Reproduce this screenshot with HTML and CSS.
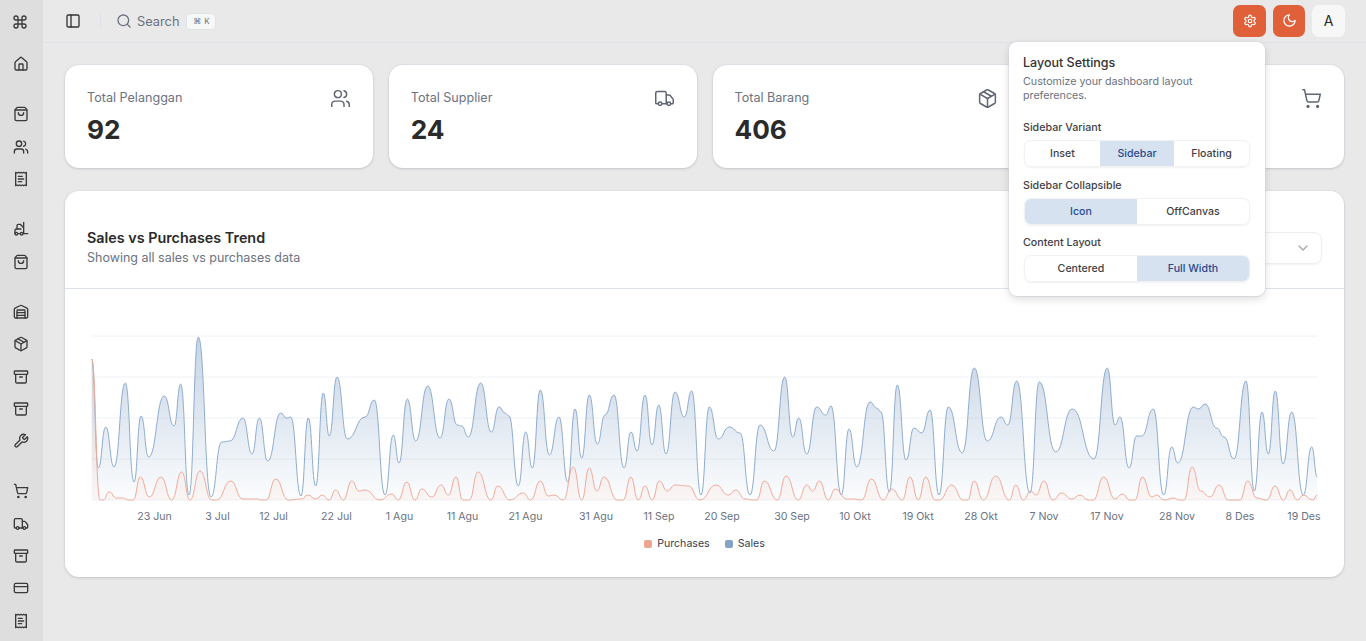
FILE: index.html
```html
<!DOCTYPE html>
<html lang="en">
<head>
  <meta charset="UTF-8">
  <meta name="viewport" content="width=device-width, initial-scale=1.0">
  <title>Dashboard</title>
  <link rel="stylesheet" href="styles.css">
</head>
<body>
  <svg class="sprite" aria-hidden="true">
    <symbol id="i-command" viewBox="0 0 24 24"><path d="M15 6v12a3 3 0 1 0 3-3H6a3 3 0 1 0 3 3V6a3 3 0 1 0-3 3h12a3 3 0 1 0-3-3"/></symbol>
    <symbol id="i-home" viewBox="0 0 24 24"><path d="M15 21v-8a1 1 0 0 0-1-1h-4a1 1 0 0 0-1 1v8"/><path d="M3 10a2 2 0 0 1 .709-1.528l7-5.999a2 2 0 0 1 2.582 0l7 5.999A2 2 0 0 1 21 10v9a2 2 0 0 1-2 2H5a2 2 0 0 1-2-2z"/></symbol>
    <symbol id="i-bag" viewBox="0 0 24 24"><path d="M16 10a4 4 0 0 1-8 0"/><path d="M3.103 6.034h17.794"/><path d="M3.4 5.467a2 2 0 0 0-.4 1.2V20a2 2 0 0 0 2 2h14a2 2 0 0 0 2-2V6.667a2 2 0 0 0-.4-1.2l-2-2.667A2 2 0 0 0 17 2H7a2 2 0 0 0-1.6.8z"/></symbol>
    <symbol id="i-users" viewBox="0 0 24 24"><path d="M16 21v-2a4 4 0 0 0-4-4H6a4 4 0 0 0-4 4v2"/><circle cx="9" cy="7" r="4"/><path d="M22 21v-2a4 4 0 0 0-3-3.87"/><path d="M16 3.13a4 4 0 0 1 0 7.75"/></symbol>
    <symbol id="i-receipt" viewBox="0 0 24 24"><path d="M4 2v20l2-1 2 1 2-1 2 1 2-1 2 1 2-1 2 1V2l-2 1-2-1-2 1-2-1-2 1-2-1-2 1Z"/><path d="M14 8H8"/><path d="M16 12H8"/><path d="M13 16H8"/></symbol>
    <symbol id="i-forklift" viewBox="0 0 24 24"><path d="M12 12H5a2 2 0 0 0-2 2v5"/><circle cx="13" cy="19" r="2"/><circle cx="5" cy="19" r="2"/><path d="M8 19h3m5-17v17h6M6 12V7c0-1.1.9-2 2-2h3l5 5"/></symbol>
    <symbol id="i-warehouse" viewBox="0 0 24 24"><path d="M18 21V10a1 1 0 0 0-1-1H7a1 1 0 0 0-1 1v11"/><path d="M22 19a2 2 0 0 1-2 2H4a2 2 0 0 1-2-2V8a2 2 0 0 1 1.132-1.803l7.95-3.974a2 2 0 0 1 1.837 0l7.948 3.974A2 2 0 0 1 22 8z"/><path d="M6 13h12"/><path d="M6 17h12"/></symbol>
    <symbol id="i-package" viewBox="0 0 24 24"><path d="M11 21.73a2 2 0 0 0 2 0l7-4A2 2 0 0 0 21 16V8a2 2 0 0 0-1-1.73l-7-4a2 2 0 0 0-2 0l-7 4A2 2 0 0 0 3 8v8a2 2 0 0 0 1 1.73z"/><path d="M12 22V12"/><path d="M3.3 7 12 12l8.7-5"/><path d="m7.5 4.27 9 5.15"/></symbol>
    <symbol id="i-archive" viewBox="0 0 24 24"><rect x="2" y="3" width="20" height="5" rx="1"/><path d="M4 8v11a2 2 0 0 0 2 2h12a2 2 0 0 0 2-2V8"/><path d="M10 12h4"/></symbol>
    <symbol id="i-wrench" viewBox="0 0 24 24"><path d="M14.7 6.3a1 1 0 0 0 0 1.4l1.6 1.6a1 1 0 0 0 1.4 0l3.77-3.77a6 6 0 0 1-7.94 7.94l-6.91 6.91a2.12 2.12 0 0 1-3-3l6.91-6.91a6 6 0 0 1 7.94-7.94l-3.76 3.76z"/></symbol>
    <symbol id="i-cart" viewBox="0 0 24 24"><circle cx="8" cy="21" r="1"/><circle cx="19" cy="21" r="1"/><path d="M2.05 2.05h2l2.66 12.42a2 2 0 0 0 2 1.58h9.78a2 2 0 0 0 1.95-1.57l1.65-7.43H5.12"/></symbol>
    <symbol id="i-truck" viewBox="0 0 24 24"><path d="M14 18V6a2 2 0 0 0-2-2H4a2 2 0 0 0-2 2v11a1 1 0 0 0 1 1h2"/><path d="M15 18H9"/><path d="M19 18h2a1 1 0 0 0 1-1v-3.65a1 1 0 0 0-.22-.624l-3.48-4.35A1 1 0 0 0 17.52 8H14"/><circle cx="17" cy="18" r="2"/><circle cx="7" cy="18" r="2"/></symbol>
    <symbol id="i-card" viewBox="0 0 24 24"><rect x="2" y="5" width="20" height="14" rx="2"/><path d="M2 10h20"/></symbol>
    <symbol id="i-panel" viewBox="0 0 24 24"><rect x="3" y="3" width="18" height="18" rx="2"/><path d="M9 3v18"/></symbol>
    <symbol id="i-search" viewBox="0 0 24 24"><circle cx="11" cy="11" r="8"/><path d="m21 21-4.3-4.3"/></symbol>
    <symbol id="i-settings" viewBox="0 0 24 24"><path d="M12.22 2h-.44a2 2 0 0 0-2 2v.18a2 2 0 0 1-1 1.73l-.43.25a2 2 0 0 1-2 0l-.15-.08a2 2 0 0 0-2.73.73l-.22.38a2 2 0 0 0 .73 2.73l.15.1a2 2 0 0 1 1 1.72v.51a2 2 0 0 1-1 1.74l-.15.09a2 2 0 0 0-.73 2.73l.22.38a2 2 0 0 0 2.73.73l.15-.08a2 2 0 0 1 2 0l.43.25a2 2 0 0 1 1 1.73V20a2 2 0 0 0 2 2h.44a2 2 0 0 0 2-2v-.18a2 2 0 0 1 1-1.73l.43-.25a2 2 0 0 1 2 0l.15.08a2 2 0 0 0 2.73-.73l.22-.39a2 2 0 0 0-.73-2.73l-.15-.08a2 2 0 0 1-1-1.74v-.5a2 2 0 0 1 1-1.74l.15-.09a2 2 0 0 0 .73-2.73l-.22-.38a2 2 0 0 0-2.73-.73l-.15.08a2 2 0 0 1-2 0l-.43-.25a2 2 0 0 1-1-1.73V4a2 2 0 0 0-2-2z"/><circle cx="12" cy="12" r="3"/></symbol>
    <symbol id="i-moon" viewBox="0 0 24 24"><path d="M12 3a6 6 0 0 0 9 9 9 9 0 1 1-9-9Z"/></symbol>
    <symbol id="i-chevron" viewBox="0 0 24 24"><path d="m6 9 6 6 6-6"/></symbol>
  </svg>

  <div class="app">
    <aside class="sidebar">
      <div class="logo"><svg class="icon"><use href="#i-command"/></svg></div>
      <nav class="nav">
        <div class="nav-group">
          <a class="nav-item"><svg class="icon"><use href="#i-home"/></svg></a>
        </div>
        <div class="nav-group">
          <a class="nav-item"><svg class="icon"><use href="#i-bag"/></svg></a>
          <a class="nav-item"><svg class="icon"><use href="#i-users"/></svg></a>
          <a class="nav-item"><svg class="icon"><use href="#i-receipt"/></svg></a>
        </div>
        <div class="nav-group">
          <a class="nav-item"><svg class="icon"><use href="#i-forklift"/></svg></a>
          <a class="nav-item"><svg class="icon"><use href="#i-bag"/></svg></a>
        </div>
        <div class="nav-group">
          <a class="nav-item"><svg class="icon"><use href="#i-warehouse"/></svg></a>
          <a class="nav-item"><svg class="icon"><use href="#i-package"/></svg></a>
          <a class="nav-item"><svg class="icon"><use href="#i-archive"/></svg></a>
          <a class="nav-item"><svg class="icon"><use href="#i-archive"/></svg></a>
          <a class="nav-item"><svg class="icon"><use href="#i-wrench"/></svg></a>
        </div>
        <div class="nav-group">
          <a class="nav-item"><svg class="icon"><use href="#i-cart"/></svg></a>
          <a class="nav-item"><svg class="icon"><use href="#i-truck"/></svg></a>
          <a class="nav-item"><svg class="icon"><use href="#i-archive"/></svg></a>
          <a class="nav-item"><svg class="icon"><use href="#i-card"/></svg></a>
          <a class="nav-item"><svg class="icon"><use href="#i-receipt"/></svg></a>
        </div>
      </nav>
    </aside>

    <div class="content">
      <header class="topbar">
        <div class="topbar-left">
          <svg class="icon icon-panel"><use href="#i-panel"/></svg>
          <span class="topbar-sep"></span>
          <svg class="icon icon-search"><use href="#i-search"/></svg>
          <span class="search-text">Search</span>
          <kbd class="search-kbd"><span>⌘</span> K</kbd>
        </div>
        <div class="topbar-right">
          <button class="top-btn top-btn-accent"><svg class="icon"><use href="#i-settings"/></svg></button>
          <button class="top-btn top-btn-accent top-btn-moon"><svg class="icon"><use href="#i-moon"/></svg></button>
          <button class="top-btn top-btn-avatar">A</button>
        </div>
      </header>

      <main class="main">
        <section class="stats">
          <div class="card stat">
            <div>
              <p class="stat-label">Total Pelanggan</p>
              <p class="stat-value">92</p>
            </div>
            <svg class="icon stat-icon"><use href="#i-users"/></svg>
          </div>
          <div class="card stat">
            <div>
              <p class="stat-label">Total Supplier</p>
              <p class="stat-value">24</p>
            </div>
            <svg class="icon stat-icon"><use href="#i-truck"/></svg>
          </div>
          <div class="card stat">
            <div>
              <p class="stat-label">Total Barang</p>
              <p class="stat-value">406</p>
            </div>
            <svg class="icon stat-icon"><use href="#i-package"/></svg>
          </div>
          <div class="card stat stat-last">
            <svg class="icon stat-icon"><use href="#i-cart"/></svg>
          </div>
        </section>

        <section class="card chart-card">
          <div class="chart-head">
            <div>
              <h2 class="chart-title">Sales vs Purchases Trend</h2>
              <p class="chart-sub">Showing all sales vs purchases data</p>
            </div>
            <div class="range-select"><svg class="icon"><use href="#i-chevron"/></svg></div>
          </div>
          <svg id="chart" class="chart" viewBox="65 289 1279 241"></svg>
          <div class="legend">
            <span class="legend-item"><i class="swatch swatch-purchases"></i>Purchases</span>
            <span class="legend-item"><i class="swatch swatch-sales"></i>Sales</span>
          </div>
        </section>
      </main>
    </div>
  </div>

  <div class="popover">
    <h3 class="popover-title">Layout Settings</h3>
    <p class="popover-sub">Customize your dashboard layout preferences.</p>

    <p class="field-label">Sidebar Variant</p>
    <div class="segments segments-three">
      <span class="segment">Inset</span>
      <span class="segment active">Sidebar</span>
      <span class="segment">Floating</span>
    </div>

    <p class="field-label">Sidebar Collapsible</p>
    <div class="segments">
      <span class="segment active">Icon</span>
      <span class="segment">OffCanvas</span>
    </div>

    <p class="field-label">Content Layout</p>
    <div class="segments">
      <span class="segment">Centered</span>
      <span class="segment active">Full Width</span>
    </div>
  </div>

  <script src="script.js"></script>
</body>
</html>
```
FILE: styles.css
```css
* {
  box-sizing: border-box;
}

body {
  margin: 0;
  height: 100vh;
  overflow: hidden;
  background: #e9e9e9;
  color: #2a2a2a;
  font-family: Inter, "Noto Sans", sans-serif;
}

p, h2, h3 {
  margin: 0;
}

.sprite {
  display: none;
}

.icon {
  width: 16px;
  height: 16px;
  fill: none;
  stroke: currentColor;
  stroke-width: 2;
  stroke-linecap: round;
  stroke-linejoin: round;
  flex: none;
}

.app {
  display: flex;
  height: 100vh;
}

/* sidebar */
.sidebar {
  width: 43px;
  flex: none;
  background: #dedede;
  color: #3a3a3a;
}

.logo {
  height: 43px;
  display: flex;
  align-items: center;
  padding-left: 12px;
}

.nav {
  padding-top: 5px;
}

.nav-group + .nav-group {
  margin-top: 18px;
}

.nav-item {
  height: 32.3px;
  display: flex;
  align-items: center;
  padding-left: 13px;
}

/* topbar */
.content {
  flex: 1;
  min-width: 0;
}

.topbar {
  height: 43px;
  display: flex;
  align-items: center;
  justify-content: space-between;
  padding: 0 21px 0 22px;
  border-bottom: 1px solid #dde2ea;
}

.topbar-left {
  display: flex;
  align-items: center;
  color: #6b7280;
}

.icon-panel {
  width: 16px;
  height: 16px;
  color: #333;
}

.topbar-sep {
  width: 1px;
  height: 15px;
  margin: 0 15px 0 19px;
  background: #dde2ea;
}

.icon-search {
  width: 16px;
  height: 16px;
}

.search-text {
  margin-left: 5px;
  font-size: 12.8px;
}

.search-kbd {
  margin-left: 7px;
  width: 30px;
  height: 17px;
  display: flex;
  align-items: center;
  justify-content: center;
  gap: 3px;
  border: 1px solid #dfe3e8;
  border-radius: 4px;
  background: #f6f7f7;
  font-family: Inter, sans-serif;
  font-size: 8px;
  color: #6b7280;
}

.topbar-right {
  display: flex;
  gap: 7px;
  margin-top: -1px;
}

.top-btn {
  width: 33px;
  height: 32px;
  padding: 0;
  border: 0;
  border-radius: 7px;
  display: flex;
  align-items: center;
  justify-content: center;
  font-family: inherit;
}

.top-btn .icon {
  width: 14px;
  height: 14px;
}

.top-btn-accent {
  background: #e0603a;
  color: #fff;
}

.top-btn-moon {
  width: 32px;
}

.top-btn-moon .icon {
  width: 15px;
  height: 15px;
}

.top-btn-avatar {
  background: #f7f7f7;
  color: #2a2a2a;
  font-size: 14px;
}

/* page */
.main {
  padding: 22px 22px 0;
}

.stats {
  display: grid;
  grid-template-columns: repeat(4, 1fr);
  gap: 16px;
  margin-bottom: 23px;
}

.card {
  background: #fff;
  border-radius: 14px;
  box-shadow: 0 1px 3px rgba(0, 0, 0, 0.14), 0 0 0 1px rgba(215, 222, 232, 0.45);
}

.stat {
  display: flex;
  justify-content: space-between;
  align-items: flex-start;
  padding: 23px 22px 20px;
  height: 103px;
}

.stat-last {
  justify-content: flex-end;
}

.stat-label {
  font-size: 12.6px;
  line-height: 20px;
  color: #6b7280;
}

.stat-value {
  margin-top: 5px;
  font-size: 26.2px;
  line-height: 34px;
  font-weight: 700;
  color: #2a2a2a;
}

.stat-icon {
  width: 21px;
  height: 21px;
  color: #5f6672;
  stroke-width: 1.7;
}

/* chart */
.chart-head {
  height: 98px;
  display: flex;
  align-items: center;
  justify-content: space-between;
  padding: 16px 22px 0;
  border-bottom: 1px solid #dde2ea;
}

.chart-title {
  margin-bottom: 1px;
  font-size: 14.35px;
  line-height: 20px;
  font-weight: 600;
}

.chart-sub {
  font-size: 12.5px;
  line-height: 18px;
  color: #6b7280;
}

.range-select {
  width: 160px;
  height: 32px;
  display: flex;
  align-items: center;
  justify-content: flex-end;
  padding-right: 10px;
  border: 1px solid #eceef1;
  border-radius: 8px;
  box-shadow: 0 1px 2px rgba(0, 0, 0, 0.05);
  color: #a3a8b0;
}

.chart {
  display: block;
  width: 100%;
  height: 241px;
}

.grid-line {
  stroke: #f0f2f5;
  stroke-width: 1;
}

.tick {
  font-size: 10.6px;
  fill: #6b7280;
  text-anchor: middle;
}

.line {
  fill: none;
  stroke-width: 1;
}

.line-sales {
  stroke: #8fadcf;
}

.line-purchases {
  stroke: #f0ab9a;
}

.legend {
  display: flex;
  justify-content: center;
  gap: 15px;
  padding: 6px 0 26px;
  font-size: 10.6px;
  line-height: 15px;
  color: #374151;
}

.legend-item {
  display: flex;
  align-items: center;
  gap: 5px;
}

.swatch {
  width: 8px;
  height: 8px;
  border-radius: 2px;
}

.swatch-purchases {
  background: #efa491;
}

.swatch-sales {
  background: #84a4c6;
}

/* layout settings popover */
.popover {
  position: absolute;
  top: 42px;
  left: 1009px;
  width: 256px;
  height: 254px;
  padding: 12px 14px;
  background: #fff;
  border-radius: 8px;
  box-shadow: 0 3px 8px rgba(0, 0, 0, 0.14), 0 0 0 1px rgba(215, 222, 232, 0.45);
}

.popover-title {
  font-size: 12.5px;
  line-height: 18px;
  font-weight: 500;
  color: #333;
}

.popover-sub {
  margin-top: 3px;
  font-size: 10.7px;
  line-height: 14px;
  color: #6b7280;
}

.field-label {
  font-size: 10.7px;
  line-height: 16px;
  font-weight: 500;
  color: #3f3f46;
}

.popover-sub + .field-label {
  margin-top: 17px;
}

.segments {
  display: grid;
  grid-template-columns: 1fr 1fr;
  width: 226px;
  height: 27px;
  margin: 4px 0 10.5px 1px;
  border: 1px solid #f0f2f4;
  border-radius: 7px;
  overflow: hidden;
  box-shadow: 0 1px 2px rgba(0, 0, 0, 0.06);
}

.segments-three {
  grid-template-columns: 75px 74px 1fr;
}

.segment {
  display: flex;
  align-items: center;
  justify-content: center;
  font-size: 10.6px;
  font-weight: 500;
  color: #3f3f46;
}

.segment.active {
  background: #d6e2ef;
  color: #2a4a90;
}
```
FILE: script.js
```js
// points are read off in page coordinates, so the chart viewBox starts at the card corner
const salesPoints = "91.7,359 98.3,468 105.7,427 114,467 125.3,383 134,482 141,416 148.7,457 164.3,396 174,426 180.7,384 189,495 198.3,337 211,497 221.7,442 230,441 243,418 252,454 259.3,418 267.7,461 280.7,413 286.7,418 290.7,417 301,496 308.3,418 315.7,486 323.3,393 329.3,436 337,377 347.3,439 365,417 374.3,400 385,495 393.3,435 399,463 407.3,399 415.7,441 427.7,386 440,438 449,399 457.3,425 461.7,426 468.3,437 480.7,383 491.3,432 499,407 505,413 509,416 518.3,486 525.7,432 532.3,468 540.3,390 549.3,455 559,417 567.7,482 575,409 581.7,458 589.3,395 597.3,444 605,415 614,395 624,468 631,432 637,451 645,395 652,445 658.7,405 666,454 675,392 684.3,417 691.7,391 701,495 709.3,407 718.3,439 729.3,427 740,433 750,495 760,425 774,451 784.7,377 792.7,437 798.7,418 806.7,454 816.7,407 825.7,415 831,406 841.3,495 849,429 856.7,467 870,402 876.7,408 881,412 889.3,492 897.3,385 906,460 914,428 921.7,433 930,410 939,495 948.3,407 962.3,453 974.3,368 987.3,441 1001,417 1007.7,425 1016.7,381 1030,493 1039.3,382 1055.7,452 1072.3,409 1094,459 1107.3,368 1115,425 1120,417 1129,468 1136.7,436 1141.7,436 1153.3,409 1163.7,495 1171.7,447 1177.7,463 1193.3,407 1198.3,409 1205,404 1216.7,428 1224,437 1234,459 1246,381 1254.3,491 1262,412 1268.3,454 1275.3,391 1283,464 1291.7,412 1303.3,495 1311.7,447 1317.3,477";

const purchasePoints = "91.7,359 100,500 103.3,500 109,492 116.7,498 123.3,498 128.3,500 133.3,500 140.3,477 149.3,497 161,477 171.7,500 181.7,472 190,500 200,471 211.7,500 216.7,500 230.7,481 242.7,499 256.7,499 261.7,500 266,500 275.7,479 288.3,500 301.7,499 307.7,495 316,499 322.3,495 329,500 335.7,490 343.3,500 351.7,481 359,491 365,490 380,500 391.7,494 398.3,500 406.7,482 415,500 421.7,489 431.7,497 441,485 448.3,495 456,477 462.7,500 469.3,500 478,472 491,500 497.7,486 510,500 523.3,493 530.7,500 540.3,481 548.3,496 554,495 563.3,500 573.3,467 581.7,500 589.3,468 596.7,491 604,477 617.3,500 623.3,500 630.7,477 638.3,500 645,486 652.3,500 659.3,481 667.3,491 675,485 688.3,486 700,500 716,485 728.3,495 735.7,490 745,499 752.7,500 756.7,500 764.3,481 777.3,500 786,476 798.3,500 806.7,485 812.7,491 819.3,481 828.3,500 835,489 846.7,499 853.3,499 861.7,500 871.3,479 883.3,500 891.7,489 902.3,500 910,477 918.3,500 925.7,477 935,500 939.3,500 951.7,485 963.3,500 967.7,500 974,481 983.3,500 995.7,476 1009.3,500 1015.7,485 1023.3,500 1030.7,491 1036,495 1044,481 1052.7,500 1061.7,493 1071.7,499 1080,495 1088.3,500 1093.3,500 1103.7,477 1115,499 1122.3,494 1130,500 1135,500 1142.3,477 1151.7,497 1156.7,495 1164,500 1174,498 1179.3,500 1184,500 1192,467 1200.7,491 1210,497 1219,485 1228.3,500 1240,500 1247.7,481 1256.7,498 1266.7,500 1275,486 1283.3,500 1290,490 1297.3,500 1303.3,495 1312.7,500 1317.3,495";

const ticks = [
  ["23 Jun", 154.5], ["3 Jul", 217.5], ["12 Jul", 273.5], ["22 Jul", 336.5],
  ["1 Agu", 399.5], ["11 Agu", 462.5], ["21 Agu", 525.5], ["31 Agu", 596],
  ["11 Sep", 659], ["20 Sep", 722], ["30 Sep", 792], ["10 Okt", 855],
  ["19 Okt", 918], ["28 Okt", 981], ["7 Nov", 1044], ["17 Nov", 1107],
  ["28 Nov", 1177], ["8 Des", 1240], ["19 Des", 1304]
];

const gridLines = [336, 377, 418, 459, 500];
const left = 91.7;
const right = 1317.3;
const baseline = 500;

function parsePoints(text) {
  return text.split(" ").map(p => p.split(",").map(Number));
}

// flat tangents at every point, the points are nearly all peaks and valleys
function smoothPath(points) {
  let d = `M${points[0][0]} ${points[0][1]}`;
  for (let i = 1; i < points.length; i++) {
    const [x0, y0] = points[i - 1];
    const [x1, y1] = points[i];
    const mid = (x0 + x1) / 2;
    d += `C${mid} ${y0} ${mid} ${y1} ${x1} ${y1}`;
  }
  return d;
}

function gradient(id, color, top, bottom) {
  return `<linearGradient id="${id}" x1="0" y1="0" x2="0" y2="1">
    <stop offset="0" stop-color="${color}" stop-opacity="${top}"/>
    <stop offset="1" stop-color="${color}" stop-opacity="${bottom}"/>
  </linearGradient>`;
}

function series(points, name) {
  const line = smoothPath(points);
  const last = points[points.length - 1][0];
  return `<path d="${line}L${last} ${baseline}L${left} ${baseline}Z" fill="url(#fill-${name})"/>
    <path class="line line-${name}" d="${line}"/>`;
}

const grid = gridLines
  .map(y => `<line class="grid-line" x1="${left}" x2="${right}" y1="${y}" y2="${y}"/>`)
  .join("");

const labels = ticks
  .map(([text, x]) => `<text class="tick" x="${x}" y="520">${text}</text>`)
  .join("");

document.getElementById("chart").innerHTML = `
  <defs>
    ${gradient("fill-sales", "#7f9fc4", 0.45, 0.03)}
    ${gradient("fill-purchases", "#ff9d85", 0.12, 0.07)}
  </defs>
  ${grid}
  ${series(parsePoints(salesPoints), "sales")}
  ${series(parsePoints(purchasePoints), "purchases")}
  ${labels}`;
```
